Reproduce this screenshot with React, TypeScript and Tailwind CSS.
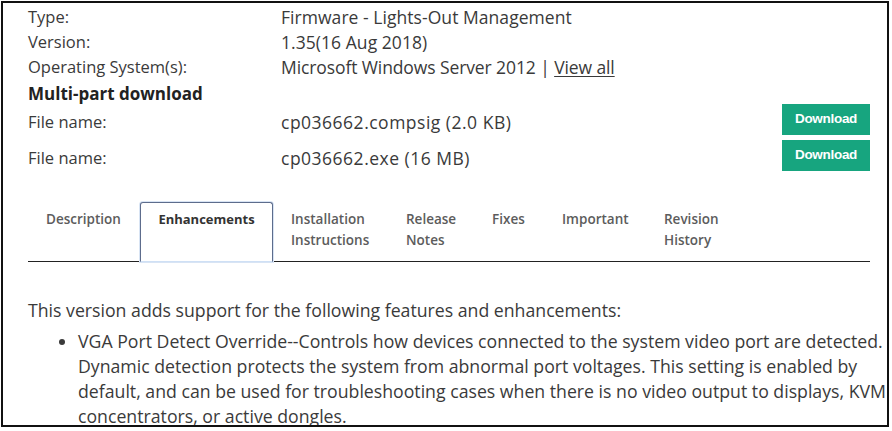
const rows = [
  { label: 'Type:', value: 'Firmware - Lights-Out Management' },
  { label: 'Version:', value: '1.35(16 Aug 2018)' },
];

const files = [
  { name: 'cp036662.compsig (2.0 KB)' },
  { name: 'cp036662.exe (16 MB)' },
];

const tabs = [
  { id: 'description', lines: ['Description'], width: 'w-[112px]' },
  { id: 'enhancements', lines: ['Enhancements'], width: 'w-[133px]' },
  { id: 'installation', lines: ['Installation', 'Instructions'], width: 'w-[115px]' },
  { id: 'release', lines: ['Release', 'Notes'], width: 'w-[86px]' },
  { id: 'fixes', lines: ['Fixes'], width: 'w-[70px]' },
  { id: 'important', lines: ['Important'], width: 'w-[102px]' },
  { id: 'revision', lines: ['Revision', 'History'], width: 'w-[100px]' },
];

export default function App() {
  const active = 'enhancements';

  return (
    <div className="w-[892px] h-[431px] bg-white p-[1px]">
      <div className="w-[888px] h-[426px] border-2 border-[#111] overflow-hidden font-['Open_Sans',sans-serif] text-[#3a3a3a]">
        <div className="pl-[25px] pr-[17px] pt-[2px]">
          {rows.map((row) => (
            <div key={row.label} className="flex h-[25px] items-center text-[16.5px]">
              <div className="w-[253px]">{row.label}</div>
              <div className="text-[17.5px] tracking-[0.05px]">{row.value}</div>
            </div>
          ))}
          <div className="flex h-[25px] items-center text-[16.5px]">
            <div className="w-[253px]">Operating System(s):</div>
            <div className="text-[17.5px] tracking-[-0.1px]">
              Microsoft Windows Server 2012 |{' '}
              <a href="#" className="underline underline-offset-2">View all</a>
            </div>
          </div>
          <div className="flex h-[24px] items-center pt-[3px] text-[17px] font-bold text-[#222]">
            Multi-part download
          </div>

          {files.map((file) => (
            <div key={file.name} className="flex h-[36px] text-[16.5px]">
              <div className="w-[253px] self-center">File name:</div>
              <div className="flex-1 self-center text-[17.5px] tracking-[0.5px]">{file.name}</div>
              <button className="h-[31px] w-[88px] bg-[#17a57f] text-white text-[13.5px] font-bold font-['Liberation_Sans',sans-serif] tracking-[-0.3px]">
                Download
              </button>
            </div>
          ))}

          <div className="mt-[26px] flex h-[60px] border-b border-[#222]">
            {tabs.map((tab) => {
              const isActive = tab.id === active;
              return (
                <div
                  key={tab.id}
                  className={
                    isActive
                      ? 'w-[133px] -mb-px rounded-t-[3px] border border-b-[#cfe0f5] border-[#5d6c8c] bg-white pt-[7px] text-center text-[13px] font-bold text-[#333] shadow-[0_0_0_1px_#d8e4f4]'
                      : `${tab.width} pl-[18px] pt-[7px] text-[13.5px] font-semibold leading-[21px] text-[#5c5c5c]`
                  }
                >
                  {tab.lines.map((line) => (
                    <div key={line}>{line}</div>
                  ))}
                </div>
              );
            })}
          </div>
        </div>

        <div className="pl-[25px] pt-[36px] text-[17.7px] leading-[25px]">
          <p>This version adds support for the following features and enhancements:</p>
          <ul className="mt-[6px] list-disc pl-[50px]">
            <li>
              VGA Port Detect Override--Controls how devices connected to the system video port are detected.
              Dynamic detection protects the system from abnormal port voltages. This setting is enabled by
              default, and can be used for troubleshooting cases when there is no video output to displays, KVM
              concentrators, or active dongles.
            </li>
          </ul>
        </div>
      </div>
    </div>
  );
}
